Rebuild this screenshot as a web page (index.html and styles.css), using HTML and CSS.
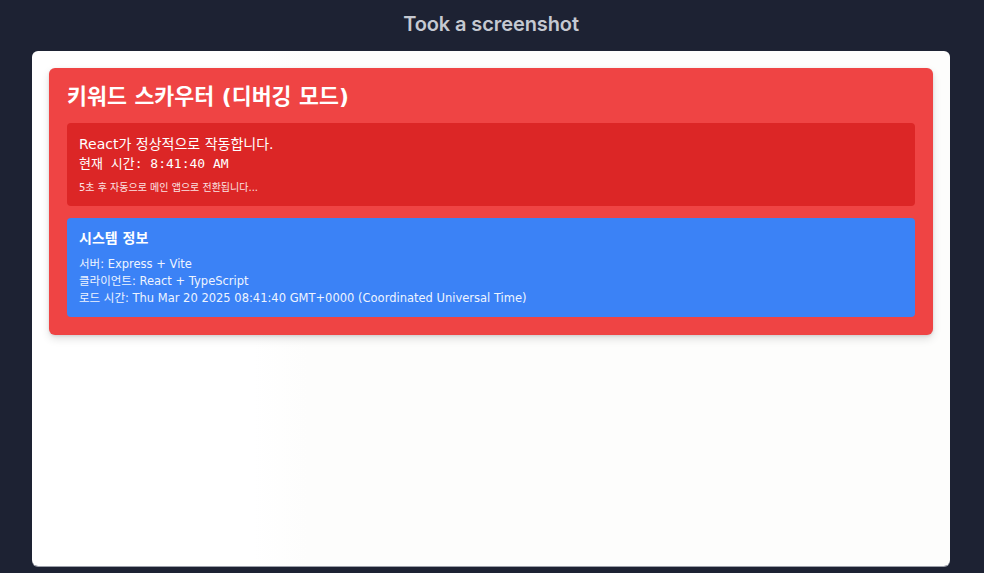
FILE: index.html
```html
<!DOCTYPE html>
<html lang="ko">
<head>
<meta charset="utf-8">
<title>Took a screenshot</title>
<link rel="stylesheet" href="styles.css">
</head>
<body>
<div class="page">
  <div class="topbar">Took a screenshot</div>
  <div class="panel">
    <div class="card">
      <h1 class="card-title">키워드 스카우터 (디버깅 모드)</h1>
      <div class="status">
        <p class="status-main">React가 정상적으로 작동합니다.</p>
        <p class="status-time">현재 시간: 8:41:40 AM</p>
        <p class="status-note">5초 후 자동으로 메인 앱으로 전환됩니다...</p>
      </div>
      <div class="info">
        <h2 class="info-title">시스템 정보</h2>
        <p class="info-line">서버: Express + Vite</p>
        <p class="info-line">클라이언트: React + TypeScript</p>
        <p class="info-line">로드 시간: Thu Mar 20 2025 08:41:40 GMT+0000 (Coordinated Universal Time)</p>
      </div>
    </div>
  </div>
</div>
</body>
</html>
```

FILE: styles.css
```css
* { box-sizing: border-box; }
html, body {
  margin: 0;
  padding: 0;
  background: #1d2233;
  height: 100%;
}
body {
  font-family: "DejaVu Sans", "Noto Sans CJK KR", sans-serif;
}
.page {
  display: flex;
  flex-direction: column;
  height: 573px;
  padding: 0 34px 7px 32px;
}
.topbar {
  height: 51px;
  display: flex;
  align-items: center;
  justify-content: center;
  padding-bottom: 3px;
  font-family: Inter, "Liberation Sans", sans-serif;
  font-weight: 600;
  font-size: 20px;
  color: #c5c9d1;
  letter-spacing: -0.1px;
}
.panel {
  flex: 1;
  background: linear-gradient(90deg, #ffffff 0%, #ffffff 24%, #fdfdfc 30%, #fdfdfc 100%);
  border-radius: 6px;
  padding: 17px;
  box-shadow: 0 1px 0 #9ca0aa;
}
.card {
  background: #ef4444;
  border-radius: 6px;
  padding: 15px 18px 18px;
  box-shadow: 0 4px 8px rgba(0,0,0,0.12), 0 1px 3px rgba(0,0,0,0.1);
  color: #ffffff;
}
.card-title {
  margin: 0 0 12px;
  font-size: 21.7px;
  line-height: 28px;
  font-weight: 700;
  font-family: "DejaVu Sans", "Noto Sans CJK KR", sans-serif;
}
.status {
  background: #dc2626;
  border-radius: 4px;
  padding: 11px 12px 12px;
}
.status p { margin: 0; }
.status-main {
  font-size: 14px;
  line-height: 20px;
}
.status-time {
  font-family: "DejaVu Sans Mono", "Noto Sans CJK KR", monospace;
  font-size: 13px;
  line-height: 19px;
}
.status-note {
  font-size: 10px;
  line-height: 13px;
  margin-top: 8px !important;
  color: #fbe3e3;
}
.info {
  margin-top: 12px;
  background: #3b82f6;
  border-radius: 4px;
  padding: 12px 12px 10px;
}
.info-title {
  margin: 0 0 10px;
  font-size: 14px;
  line-height: 16px;
  font-weight: 700;
}
.info-line {
  margin: 0;
  font-size: 11.5px;
  line-height: 17px;
  color: #eef4ff;
}
```
